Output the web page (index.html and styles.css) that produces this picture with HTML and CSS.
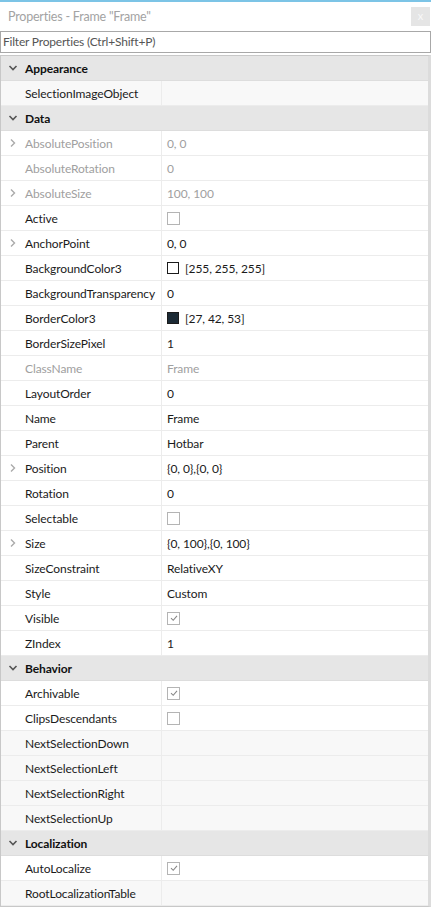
FILE: index.html
```html
<!DOCTYPE html>
<html lang="en">
<head>
    <meta charset="UTF-8">
    <title>Properties</title>
    <link rel="stylesheet" href="styles.css">
</head>
<body>

    <div class="panel">
        <div class="titlebar">
            <span class="title">Properties - Frame "Frame"</span>
            <span class="close">x</span>
        </div>

        <div class="filter">Filter Properties (Ctrl+Shift+P)</div>

        <div class="props" id="props"></div>
    </div>

    <script>
        // h = section header, ro = read-only, exp = expandable
        const rows = [
            { h: 'Appearance' },
            { n: 'SelectionImageObject', v: '', empty: true },
            { h: 'Data' },
            { n: 'AbsolutePosition', v: '0, 0', ro: true, exp: true },
            { n: 'AbsoluteRotation', v: '0', ro: true },
            { n: 'AbsoluteSize', v: '100, 100', ro: true, exp: true },
            { n: 'Active', check: false },
            { n: 'AnchorPoint', v: '0, 0', exp: true },
            { n: 'BackgroundColor3', v: '[255, 255, 255]', color: '#ffffff' },
            { n: 'BackgroundTransparency', v: '0' },
            { n: 'BorderColor3', v: '[27, 42, 53]', color: '#1b2a35' },
            { n: 'BorderSizePixel', v: '1' },
            { n: 'ClassName', v: 'Frame', ro: true },
            { n: 'LayoutOrder', v: '0' },
            { n: 'Name', v: 'Frame' },
            { n: 'Parent', v: 'Hotbar' },
            { n: 'Position', v: '{0, 0},{0, 0}', exp: true },
            { n: 'Rotation', v: '0' },
            { n: 'Selectable', check: false },
            { n: 'Size', v: '{0, 100},{0, 100}', exp: true },
            { n: 'SizeConstraint', v: 'RelativeXY' },
            { n: 'Style', v: 'Custom' },
            { n: 'Visible', check: true },
            { n: 'ZIndex', v: '1' },
            { h: 'Behavior' },
            { n: 'Archivable', check: true },
            { n: 'ClipsDescendants', check: false },
            { n: 'NextSelectionDown', v: '', empty: true },
            { n: 'NextSelectionLeft', v: '', empty: true },
            { n: 'NextSelectionRight', v: '', empty: true },
            { n: 'NextSelectionUp', v: '', empty: true },
            { h: 'Localization' },
            { n: 'AutoLocalize', check: true },
            { n: 'RootLocalizationTable', v: '', empty: true }
        ];

        const chevronDown = '<svg width="10" height="10" viewBox="0 0 10 10"><path d="M1.5 3 L5 6.5 L8.5 3" fill="none" stroke="#555" stroke-width="1.6"/></svg>';
        const chevronRight = '<svg width="10" height="10" viewBox="0 0 10 10"><path d="M3 1.5 L6.5 5 L3 8.5" fill="none" stroke="#aaa" stroke-width="1.4"/></svg>';
        const tick = '<svg width="10" height="10" viewBox="0 0 10 10"><path d="M2 5.2 L4.2 7.3 L8 2.8" fill="none" stroke="#888" stroke-width="1.1"/></svg>';

        const list = document.getElementById('props');
        let html = '';

        rows.forEach(r => {
            if (r.h) {
                html += `<div class="section"><span class="arrow">${chevronDown}</span>${r.h}</div>`;
                return;
            }

            let value = r.v || '';
            if (r.check !== undefined) {
                value = `<span class="checkbox">${r.check ? tick : ''}</span>`;
            } else if (r.color) {
                value = `<span class="swatch" style="background:${r.color}"></span>${r.v}`;
            }

            html += `<div class="row${r.ro ? ' readonly' : ''}${r.empty ? ' blank' : ''}">
                <div class="name"><span class="arrow">${r.exp ? chevronRight : ''}</span>${r.n}</div>
                <div class="value">${value}</div>
            </div>`;
        });

        list.innerHTML = html;
    </script>

</body>
</html>
```

FILE: styles.css
```css
body {
    margin: 0;
    background-color: #ffffff;
    font-family: Lato, "Open Sans", sans-serif;
    font-size: 12px;
    letter-spacing: -0.1px;
    color: #1b1b1b;
}

.panel {
    width: 431px;
    height: 908px;
    border-top: 2px solid #7cc4e6;
    box-sizing: border-box;
    overflow: hidden;
}

.titlebar {
    display: flex;
    align-items: center;
    justify-content: space-between;
    height: 29px;
    padding-left: 8px;
}

.title {
    color: #a3a3a3;
    font-size: 12.5px;
    letter-spacing: -0.2px;
}

.close {
    width: 19px;
    height: 19px;
    margin-right: 1px;
    background-color: #e5e5e5;
    color: #f8f8f8;
    font-size: 11px;
    line-height: 18px;
    text-align: center;
}

.filter {
    height: 20px;
    line-height: 20px;
    border: 1px solid #a8a8a8;
    padding-left: 2px;
    color: #555555;
    letter-spacing: -0.2px;
}

.props {
    margin-top: 2px;
    border: 1px solid #c8c8c8;
    border-right-width: 3px;
    border-right-color: #dcdcdc;
    width: 431px;
    box-sizing: border-box;
}

.section {
    display: flex;
    align-items: center;
    height: 24px;
    border-bottom: 1px solid #dddddd;
    background-color: #e6e6e6;
    font-weight: bold;
    color: #111111;
}

.arrow {
    display: inline-flex;
    align-items: center;
    justify-content: center;
    flex-shrink: 0;
    width: 24px;
    height: 24px;
}

.row {
    display: grid;
    grid-template-columns: 161px minmax(0, 1fr);
    height: 24px;
    border-bottom: 1px solid #ececec;
    background-color: #ffffff;
}

.row.blank {
    background-color: #f8f8f8;
}

.name {
    display: flex;
    align-items: center;
    min-width: 0;
    overflow: hidden;
    border-right: 1px solid #ececec;
    white-space: nowrap;
}

.value {
    display: flex;
    align-items: center;
    padding-left: 5px;
    white-space: nowrap;
}

.readonly .name,
.readonly .value {
    color: #a0a0a0;
}

.checkbox {
    display: inline-flex;
    align-items: center;
    justify-content: center;
    width: 11px;
    height: 11px;
    border: 1px solid #b4b4b4;
    background-color: #ffffff;
}

.swatch {
    width: 10px;
    height: 10px;
    border: 1px solid #1b1b1b;
    margin-right: 6px;
}
```
